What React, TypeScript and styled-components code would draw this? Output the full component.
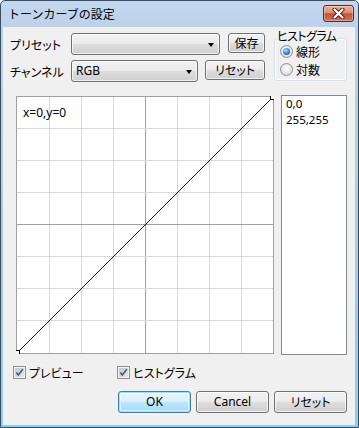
import styled, { createGlobalStyle } from "styled-components";

const GlobalStyle = createGlobalStyle`
  html, body { margin: 0; padding: 0; background: #ffffff; }
  body {
    font-family: "Noto Sans", "Noto Sans CJK JP", sans-serif;
    font-size: 12px;
    color: #000;
  }
  * { box-sizing: border-box; }
`;

const Window = styled.div`
  width: 359px;
  height: 428px;
  display: flex;
  flex-direction: column;
  border: 1px solid #3b4d62;
  border-radius: 5px 5px 0 0;
  background: linear-gradient(#c3d7ee, #bcd2ea 26px, #a8c9e8 60%, #8ccfea);
  padding: 0 3px 2px 2px;
`;

const TitleBar = styled.div`
  height: 26px;
  display: flex;
  align-items: flex-start;
  justify-content: space-between;
  padding: 0 1px 0 5px;
`;

const Title = styled.span`
  margin-top: 5px;
  font-family: "Noto Sans CJK JP", sans-serif;
  font-size: 12px;
  line-height: 16px;
  color: #000;
`;

const CloseButton = styled.div`
  width: 31px;
  height: 17px;
  margin-top: 4px;
  border: 1px solid #5a2a22;
  border-radius: 3px;
  background: linear-gradient(#eab2a3, #d98c76 45%, #c4522f 52%, #d2745a);
  box-shadow: inset 0 0 0 1px rgba(255, 255, 255, 0.35);
  display: flex;
  align-items: center;
  justify-content: center;
`;

const Client = styled.div`
  flex: 1;
  background: #f0f0f0;
  padding: 6px 8px 0 7px;
  display: flex;
  flex-direction: column;
  font-feature-settings: "palt";
`;

const TopSection = styled.div`
  display: flex;
  align-items: flex-start;
  height: 48px;
`;

const LeftRows = styled.div`
  width: 255px;
  display: flex;
  flex-direction: column;
  gap: 5px;
`;

const Row = styled.div`
  display: flex;
  align-items: flex-start;
  height: 22px;
`;

const Label = styled.span`
  width: 61px;
  padding-top: 2px;
  line-height: 20px;
  font-family: "Noto Sans CJK JP", sans-serif;
`;

const winGradient = `
  border: 1px solid #707070;
  border-radius: 3px;
  background: linear-gradient(#f2f2f2 0%, #ebebeb 48%, #dddddd 52%, #cfcfcf 100%);
  box-shadow: inset 0 0 0 1px rgba(255, 255, 255, 0.7);
`;

const Combo = styled.div<{ $w: number }>`
  width: ${(p) => p.$w}px;
  height: 22px;
  ${winGradient}
  display: flex;
  align-items: center;
  justify-content: space-between;
  padding: 0 5px 0 4px;
  line-height: 20px;
`;

const Arrow = styled.span`
  width: 0;
  height: 0;
  border-left: 3.5px solid transparent;
  border-right: 3.5px solid transparent;
  border-top: 4px solid #000;
  margin-top: 1px;
`;

const SmallButton = styled.div<{ $w: number; $gap: number }>`
  width: ${(p) => p.$w}px;
  height: 20px;
  margin-left: ${(p) => p.$gap}px;
  ${winGradient}
  display: flex;
  align-items: center;
  justify-content: center;
  line-height: 18px;
  font-family: "Noto Sans CJK JP", sans-serif;
`;

const GroupBox = styled.div`
  position: relative;
  width: 74px;
  height: 43px;
  margin: 5px 0 0 9px;
  border: 1px solid #d5dfe5;
  border-radius: 3px;
  box-shadow: inset 0 0 0 1px #ffffff;
  padding: 6px 0 0 5px;
  display: flex;
  flex-direction: column;
  gap: 5px;
`;

const Legend = styled.span`
  position: absolute;
  left: 1px;
  top: -11px;
  padding: 0 1px;
  background: #f0f0f0;
  line-height: 16px;
  letter-spacing: -0.6px;
  font-family: "Noto Sans CJK JP", sans-serif;
`;

const RadioItem = styled.div`
  display: flex;
  align-items: center;
  gap: 3px;
  height: 13px;
  line-height: 13px;
  font-family: "Noto Sans CJK JP", sans-serif;
`;

const RadioCircle = styled.span<{ $on?: boolean }>`
  width: 13px;
  height: 13px;
  border-radius: 50%;
  border: 1px solid #8f8f8f;
  background: radial-gradient(circle at 50% 40%, #ffffff, #e4e4e4 60%, #cfcfcf);
  display: flex;
  align-items: center;
  justify-content: center;
  &::after {
    content: "";
    display: ${(p) => (p.$on ? "block" : "none")};
    width: 7px;
    height: 7px;
    border-radius: 50%;
    background: radial-gradient(circle at 40% 35%, #b6e2fb, #2d7fd3 55%, #0f4f98);
  }
`;

const Middle = styled.div`
  display: flex;
  align-items: flex-start;
  margin: 15px 0 0 6px;
`;

const GraphBox = styled.div`
  position: relative;
  width: 258px;
  height: 258px;
  background: #ffffff;
`;

const GraphLabel = styled.span`
  position: absolute;
  left: 7px;
  top: 9px;
  line-height: 16px;
`;

const ListBox = styled.div`
  width: 67px;
  height: 260px;
  margin: -1px 0 0 7px;
  border: 1px solid #828790;
  background: #ffffff;
  padding: 0 4px;
  display: flex;
  flex-direction: column;
`;

const ListItem = styled.div`
  font-size: 11.5px;
  line-height: 16px;
  height: 16px;
`;

const CheckRow = styled.div`
  display: grid;
  grid-template-columns: 104px auto;
  margin-top: 11px;
  padding-left: 3px;
`;

const CheckItem = styled.div`
  display: flex;
  align-items: center;
  gap: 3px;
  height: 13px;
  line-height: 13px;
  font-family: "Noto Sans CJK JP", sans-serif;
`;

const CheckBox = styled.span`
  width: 13px;
  height: 13px;
  border: 1px solid #8e8f8f;
  background: #f4f4f4;
  display: flex;
  align-items: center;
  justify-content: center;
`;

const CheckInner = styled.span`
  width: 9px;
  height: 9px;
  background: linear-gradient(135deg, #c9c9c9, #e6e6e6);
  display: flex;
  align-items: center;
  justify-content: center;
  overflow: visible;
`;

const ButtonRow = styled.div`
  display: flex;
  justify-content: flex-end;
  gap: 5px;
  margin-top: 12px;
`;

const DialogButton = styled.div<{ $default?: boolean }>`
  width: 73px;
  height: 22px;
  ${winGradient}
  ${(p) =>
    p.$default &&
    `
    border-color: #3c7fb1;
    background: linear-gradient(#eaf6fd 0%, #d9f0fc 48%, #bee6fd 52%, #a7d9f5 100%);
    box-shadow: inset 0 0 0 1px #9ee0fb, inset 0 0 0 2px rgba(255,255,255,0.5);
  `}
  display: flex;
  align-items: center;
  justify-content: center;
  line-height: 20px;
`;

const Jp = styled.span`
  font-family: "Noto Sans CJK JP", sans-serif;
`;

function Graph() {
  const xs = [1, 2, 3, 4, 5, 6, 7];
  return (
    <svg width={258} height={258} viewBox="0 0 258 258">
      {xs.map((i) => (
        <line
          key={"v" + i}
          x1={1 + 32 * i + 0.5}
          y1={0}
          x2={1 + 32 * i + 0.5}
          y2={258}
          stroke={i === 4 ? "#a0a0a0" : "#d8d8d8"}
        />
      ))}
      {xs.map((i) => (
        <line
          key={"h" + i}
          x1={0}
          y1={32 * i + 0.5}
          x2={258}
          y2={32 * i + 0.5}
          stroke={i === 4 ? "#a0a0a0" : "#d8d8d8"}
        />
      ))}
      <rect x={0.5} y={0.5} width={257} height={257} fill="none" stroke="#a0a0a0" />
      <line x1={1.5} y1={256.5} x2={256.5} y2={1.5} stroke="#000" strokeWidth={0.9} />
      <rect x={-0.5} y={254.5} width={4} height={4} fill="#fff" stroke="#000" />
      <rect x={254.5} y={-0.5} width={4} height={4} fill="#fff" stroke="#000" />
    </svg>
  );
}

function Check() {
  return (
    <CheckBox>
      <CheckInner>
        <svg width={11} height={11} viewBox="0 0 11 11">
          <path d="M1.5 5.5 L4 8.5 L9.5 1.5" fill="none" stroke="#3f5390" strokeWidth={1.8} />
        </svg>
      </CheckInner>
    </CheckBox>
  );
}

export default function App() {
  return (
    <>
      <GlobalStyle />
      <Window>
        <TitleBar>
          <Title>トーンカーブの設定</Title>
          <CloseButton>
            <svg width={13} height={11} viewBox="0 0 13 11">
              <path d="M2.5 1.5 L10.5 9.5 M10.5 1.5 L2.5 9.5" stroke="#4a1d14" strokeWidth={4} strokeLinecap="round" />
              <path d="M2.5 1.5 L10.5 9.5 M10.5 1.5 L2.5 9.5" stroke="#ffffff" strokeWidth={2.2} strokeLinecap="round" />
            </svg>
          </CloseButton>
        </TitleBar>
        <Client>
          <TopSection>
            <LeftRows>
              <Row>
                <Label>プリセット</Label>
                <Combo $w={149}>
                  <span />
                  <Arrow />
                </Combo>
                <SmallButton $w={37} $gap={8}>保存</SmallButton>
              </Row>
              <Row>
                <Label>チャンネル</Label>
                <Combo $w={127}>
                  <span>RGB</span>
                  <Arrow />
                </Combo>
                <SmallButton $w={60} $gap={7}>リセット</SmallButton>
              </Row>
            </LeftRows>
            <GroupBox>
              <Legend>ヒストグラム</Legend>
              <RadioItem>
                <RadioCircle $on />
                線形
              </RadioItem>
              <RadioItem>
                <RadioCircle />
                対数
              </RadioItem>
            </GroupBox>
          </TopSection>
          <Middle>
            <GraphBox>
              <Graph />
              <GraphLabel>x=0,y=0</GraphLabel>
            </GraphBox>
            <ListBox>
              <ListItem>0,0</ListItem>
              <ListItem>255,255</ListItem>
            </ListBox>
          </Middle>
          <CheckRow>
            <CheckItem>
              <Check />
              プレビュー
            </CheckItem>
            <CheckItem>
              <Check />
              ヒストグラム
            </CheckItem>
          </CheckRow>
          <ButtonRow>
            <DialogButton $default>OK</DialogButton>
            <DialogButton>Cancel</DialogButton>
            <DialogButton>
              <Jp>リセット</Jp>
            </DialogButton>
          </ButtonRow>
        </Client>
      </Window>
    </>
  );
}
